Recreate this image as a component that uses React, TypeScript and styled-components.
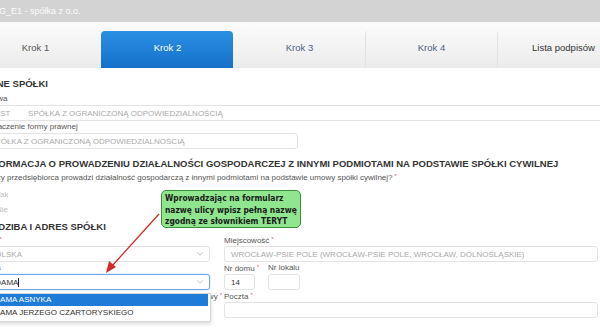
import React from "react";
import styled, { createGlobalStyle } from "styled-components";
import { ChevronDown } from "lucide-react";

const GlobalStyle = createGlobalStyle`
  html, body {
    margin: 0;
    padding: 0;
    background: #fff;
  }
  body {
    width: 600px;
    height: 330px;
    overflow: hidden;
    font-family: "Liberation Sans", Arial, sans-serif;
  }
`;

const Page = styled.div`
  position: relative;
  width: 600px;
  height: 330px;
  overflow: hidden;
  background: #fff;
`;

const TitleBar = styled.header`
  height: 22px;
  background: #d3d3d3;
  color: #fbfbfb;
  font-size: 9px;
  line-height: 22px;
  text-indent: -1px;
  white-space: nowrap;
`;

const TabBar = styled.nav`
  display: flex;
  align-items: flex-end;
  height: 46px;
  margin-left: -31px;
  background: linear-gradient(#fcfcfc, #ebebeb);
`;

const Tab = styled.div<{ $active?: boolean; $color?: string; $sep?: boolean }>`
  flex: 0 0 132px;
  height: 37px;
  box-sizing: border-box;
  padding-bottom: 4px;
  display: flex;
  align-items: center;
  justify-content: center;
  font-size: 9.5px;
  color: ${(p) => (p.$active ? "#fff" : p.$color || "#555")};
  border-radius: 4px 4px 0 0;
  background: ${(p) => (p.$active ? "linear-gradient(#2b90e4, #1570c9)" : "transparent")};
  border-left: 1px solid ${(p) => (p.$sep ? "#e2e2e2" : "transparent")};
`;

const Content = styled.main`
  width: 632px;
  margin-left: -17px;
  padding-top: 10px;
`;

const SectionTitle = styled.h2<{ $gap?: number }>`
  margin: ${(p) => p.$gap ?? 0}px 0 0;
  font-size: 9.5px;
  font-weight: bold;
  line-height: 12px;
  color: #333;
  white-space: nowrap;
`;

const Field = styled.div<{ $width?: number; $gap?: number }>`
  position: relative;
  display: flex;
  flex-direction: column;
  gap: 1px;
  min-width: 0;
  flex: none;
  width: ${(p) => (p.$width ? `${p.$width}px` : "auto")};
  margin-top: ${(p) => p.$gap ?? 0}px;
`;

const Label = styled.label<{ $align?: string; $shift?: number }>`
  display: block;
  height: 11px;
  font-size: 8px;
  line-height: 11px;
  color: #555;
  white-space: nowrap;
  text-align: ${(p) => p.$align || "left"};
  margin-right: ${(p) => p.$shift ?? 0}px;
`;

const Req = styled.span`
  color: #e05a5a;
  font-size: 6px;
  margin-left: 2px;
  vertical-align: 2px;
`;

const Box = styled.div<{ $focus?: boolean; $muted?: boolean }>`
  position: relative;
  display: flex;
  align-items: center;
  height: 16px;
  min-width: 0;
  box-sizing: border-box;
  padding: 0 4px 0 6px;
  border: 1px solid ${(p) => (p.$focus ? "#6ea8e2" : "#e3e3e3")};
  border-radius: 3px;
  box-shadow: ${(p) => (p.$focus ? "0 0 2px rgba(90, 150, 220, 0.5)" : "none")};
  font-size: 8px;
  color: ${(p) => (p.$muted ? "#aaa" : "#333")};
  white-space: pre;
  overflow: hidden;
  background: #fff;
`;

const Chevron = styled(ChevronDown)`
  margin-left: auto;
  color: #999;
  flex: none;
`;

const Caret = styled.span`
  display: inline-block;
  width: 1px;
  height: 9px;
  background: #222;
`;

const Question = styled.p`
  margin: 1px 0 0 8px;
  font-size: 8px;
  line-height: 11px;
  color: #555;
  white-space: nowrap;
`;

const Radio = styled.div<{ $gap?: number }>`
  display: flex;
  align-items: center;
  gap: 4px;
  height: 15px;
  margin-top: ${(p) => p.$gap ?? 0}px;
  font-size: 8px;
  color: #bbb;
`;

const RadioDot = styled.span`
  width: 7px;
  height: 7px;
  border: 1px solid #ccc;
  border-radius: 50%;
`;

const Address = styled.div`
  display: flex;
  gap: 14px;
  margin-top: 1px;
`;

const Column = styled.div<{ $width: number }>`
  flex: 0 0 ${(p) => p.$width}px;
  width: ${(p) => p.$width}px;
  display: flex;
  flex-direction: column;
`;

const Pair = styled.div`
  display: flex;
  gap: 13px;
`;

const Dropdown = styled.ul`
  position: absolute;
  top: calc(100% + 3px);
  left: 0;
  right: -1px;
  margin: 0;
  padding: 0 0 1px;
  list-style: none;
  background: #fff;
  border: 1px solid #d6d6d6;
  box-shadow: 0 2px 4px rgba(0, 0, 0, 0.15);
  z-index: 5;
`;

const Option = styled.li<{ $selected?: boolean }>`
  height: ${(p) => (p.$selected ? 12 : 14)}px;
  line-height: ${(p) => (p.$selected ? 12 : 14)}px;
  margin-right: 2px;
  padding-left: 5px;
  font-size: 8px;
  color: ${(p) => (p.$selected ? "#fff" : "#333")};
  background: ${(p) => (p.$selected ? "#1f7bd8" : "transparent")};
  white-space: nowrap;
`;

const Callout = styled.div`
  position: absolute;
  left: 161px;
  top: 190px;
  width: 140px;
  height: 38px;
  box-sizing: border-box;
  padding: 2px 3px;
  background: #8fe68f;
  border: 1px solid #3d8f3d;
  border-radius: 5px;
  font-family: "DejaVu Sans Condensed", "DejaVu Sans", sans-serif;
  font-weight: bold;
  font-size: 8.4px;
  line-height: 11.5px;
  color: #1a1a1a;
  white-space: nowrap;
  z-index: 6;
`;

const Arrow = styled.svg`
  position: absolute;
  left: 0;
  top: 0;
  pointer-events: none;
  z-index: 7;
`;

export default function App() {
  return (
    <Page>
      <GlobalStyle />
      <TitleBar>G_E1 - spółka z o.o.</TitleBar>
      <TabBar>
        <Tab>Krok 1</Tab>
        <Tab $active>Krok 2</Tab>
        <Tab $color="#4d5f86">Krok 3</Tab>
        <Tab $color="#4d5f86" $sep>
          Krok 4
        </Tab>
        <Tab $color="#333" $sep>
          Lista podpisów
        </Tab>
      </TabBar>

      <Content>
        <SectionTitle>DANE SPÓŁKI</SectionTitle>
        <Field $gap={3}>
          <Label>Nazwa</Label>
          <Box $muted>TEST        SPÓŁKA Z OGRANICZONĄ ODPOWIEDZIALNOŚCIĄ</Box>
        </Field>
        <Field $width={315}>
          <Label>Oznaczenie formy prawnej</Label>
          <Box $muted>SPÓŁKA Z OGRANICZONĄ ODPOWIEDZIALNOŚCIĄ</Box>
        </Field>

        <SectionTitle $gap={9}>
          INFORMACJA O PROWADZENIU DZIAŁALNOŚCI GOSPODARCZEJ Z INNYMI PODMIOTAMI NA PODSTAWIE SPÓŁKI CYWILNEJ
        </SectionTitle>
        <Question>
          Czy przedsiębiorca prowadzi działalność gospodarczą z innymi podmiotami na podstawie umowy spółki cywilnej?
          <Req>*</Req>
        </Question>
        <Radio $gap={4}>
          <RadioDot />
          Tak
        </Radio>
        <Radio>
          <RadioDot />
          Nie
        </Radio>

        <SectionTitle $gap={4}>SIEDZIBA I ADRES SPÓŁKI</SectionTitle>
        <Address>
          <Column $width={227}>
            <Field>
              <Label>
                Kraj<Req>*</Req>
              </Label>
              <Box $muted>
                POLSKA
                <Chevron size={10} strokeWidth={1.5} />
              </Box>
            </Field>
            <Field>
              <Label>Ulica</Label>
              <Box $focus>
                ADAMA
                <Caret />
                <Chevron size={10} strokeWidth={1.5} />
              </Box>
              <Dropdown>
                <Option $selected>ADAMA ASNYKA</Option>
                <Option>ADAMA JERZEGO CZARTORYSKIEGO</Option>
              </Dropdown>
            </Field>
            <Field>
              <Label $align="right" $shift={-12}>
                Kod pocztowy<Req>*</Req>
              </Label>
            </Field>
          </Column>

          <Column $width={374}>
            <Field>
              <Label>
                Miejscowość<Req>*</Req>
              </Label>
              <Box $muted>WROCŁAW-PSIE POLE (WROCŁAW-PSIE POLE, WROCŁAW, DOLNOŚLĄSKIE)</Box>
            </Field>
            <Pair>
              <Field $width={31}>
                <Label>
                  Nr domu<Req>*</Req>
                </Label>
                <Box>14</Box>
              </Field>
              <Field $width={32}>
                <Label>Nr lokalu</Label>
                <Box />
              </Field>
            </Pair>
            <Field>
              <Label>
                Poczta<Req>*</Req>
              </Label>
              <Box />
            </Field>
          </Column>
        </Address>
      </Content>

      <Callout>
        Wprowadzając na formularz
        <br />
        nazwę ulicy wpisz pełną nazwę
        <br />
        zgodną ze słownikiem TERYT
      </Callout>

      <Arrow width="600" height="330" viewBox="0 0 600 330">
        <line x1="159" y1="214" x2="112" y2="266" stroke="#d42a2a" strokeWidth="1.3" />
        <polygon points="106,273 109,261 116,267" fill="#d42a2a" />
      </Arrow>
    </Page>
  );
}
